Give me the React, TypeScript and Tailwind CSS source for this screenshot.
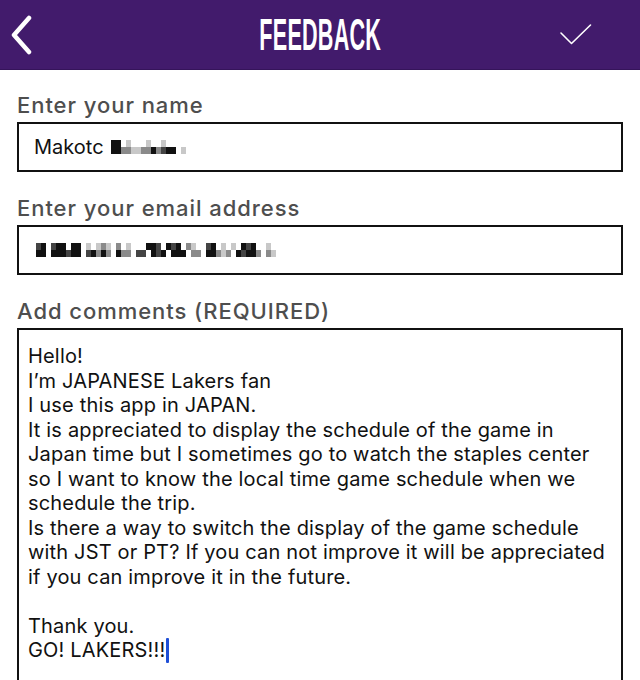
import type { ReactNode } from "react";

const FONT = { fontFamily: "Inter, 'Noto Sans', sans-serif" };

// pixelated (redacted) text: each char is a 5x7 cell
const SHADE: Record<string, string> = {
  k: "bg-[#111]",
  d: "bg-[#444]",
  g: "bg-[#8a8a8a]",
  l: "bg-[#c8c8c8]",
  ".": "bg-transparent",
};

const NAME_MOSAIC = [
  "kk.l...l..l....",
  "kkggllggkgdkk.l",
];

const EMAIL_MOSAIC = [
  "dk.dkk.kk.l.lgl.g.l...kkd.kdk.gl..dk.l.l.kdk..l.",
  "kk.kkkdkk.dkgkg.kgg.dd.kdk.kkk.gg.kkglg.kdkkg.gl",
];

function Mosaic({ rows }: { rows: string[] }) {
  return (
    <div className="flex flex-col">
      {rows.map((row, r) => (
        <div key={r} className="flex">
          {row.split("").map((c, i) => (
            <span key={i} className={`block w-[5px] h-[7px] ${SHADE[c]}`} />
          ))}
        </div>
      ))}
    </div>
  );
}

const COMMENT_LINES = [
  "Hello!",
  "I’m JAPANESE Lakers fan",
  "I use this app in JAPAN.",
  "It is appreciated to display the schedule of the game in",
  "Japan time but I sometimes go to watch the staples center",
  "so I want to know the local time game schedule when we",
  "schedule the trip.",
  "Is there a way to switch the display of the game schedule",
  "with JST or PT? If you can not improve it will be appreciated",
  "if you can improve it in the future.",
  "",
  "Thank you.",
];

function Field({ label, children, className = "" }: { label: string; children: ReactNode; className?: string }) {
  return (
    <div className={className}>
      <div className="h-[28px] leading-[28px] text-[22px] font-medium tracking-[0.95px] text-[#4e4e4e] whitespace-nowrap">
        {label}
      </div>
      <div className="mt-[3px] border-2 border-[#111]">{children}</div>
    </div>
  );
}

export default function App() {
  return (
    <div className="w-[640px] h-[680px] overflow-hidden bg-white" style={FONT}>
      {/* nav bar */}
      <div className="h-[70px] bg-[#421b6c] border-b border-[#35145a] grid grid-cols-3 items-center">
        <div className="pl-[11px]">
          <svg width="22" height="40" viewBox="0 0 22 40" fill="none">
            <path d="M18 3 L3 20 L18 37" stroke="white" strokeWidth="4.5" strokeLinecap="round" strokeLinejoin="round" />
          </svg>
        </div>
        <div className="flex justify-center">
          <span
            className="block whitespace-nowrap text-white font-bold text-[44px] leading-none scale-x-[0.49] tracking-[0.5px]"
            style={{ fontFamily: "'Liberation Sans', Arial, sans-serif" }}
          >
            FEEDBACK
          </span>
        </div>
        <div className="flex justify-end pr-[47px]">
          <svg width="34" height="24" viewBox="0 0 34 24" fill="none">
            <path d="M2 10 L12.5 20.5 L31.5 2" stroke="white" strokeWidth="1.6" strokeLinecap="round" strokeLinejoin="round" />
          </svg>
        </div>
      </div>

      <div className="px-[17px] pt-[21px]">
        <Field label="Enter your name">
          <div className="h-[46px] pl-[15px] flex items-center gap-[7px] text-[20px] text-[#111]">
            <span>Makotc</span>
            <Mosaic rows={NAME_MOSAIC} />
          </div>
        </Field>

        <Field label="Enter your email address" className="mt-[22px]">
          <div className="h-[46px] pl-[17px] flex items-center">
            <Mosaic rows={EMAIL_MOSAIC} />
          </div>
        </Field>

        <Field label="Add comments (REQUIRED)" className="mt-[22px]">
          <div className="h-[400px] pl-[9px] pt-[14px] text-[20px] leading-[24.5px] tracking-[0.17px] text-[#111]">
            {COMMENT_LINES.map((line, i) => (
              <div key={i} className="h-[24.5px] whitespace-nowrap">{line}</div>
            ))}
            <div className="h-[24.5px] whitespace-nowrap flex items-center">
              <span>GO! LAKERS!!!</span>
              <span className="block ml-[1px] w-[3px] h-[25px] bg-[#1f4fd6] rounded-[1px]" />
            </div>
          </div>
        </Field>
      </div>
    </div>
  );
}
